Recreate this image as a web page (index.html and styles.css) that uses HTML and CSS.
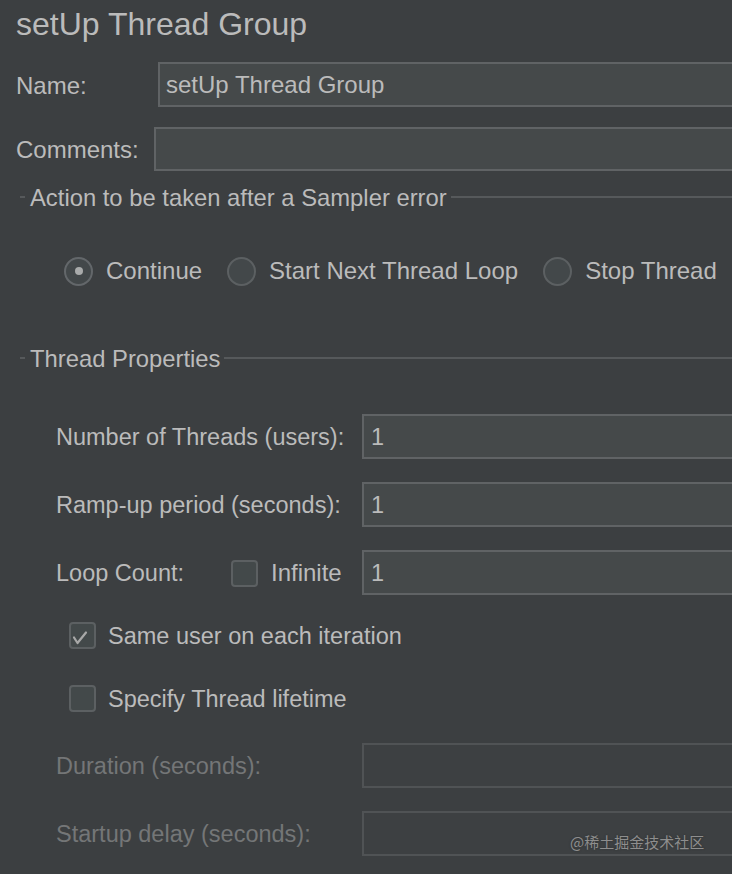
FILE: index.html
```html
<!DOCTYPE html>
<html>
<head>
<meta charset="utf-8">
<link rel="stylesheet" href="styles.css">
</head>
<body>
<div class="panel">
  <div class="title">setUp Thread Group</div>

  <div class="row row-name">
    <span class="lbl lbl-name">Name:</span>
    <div class="field">setUp Thread Group</div>
  </div>

  <div class="row row-comments">
    <span class="lbl lbl-comments">Comments:</span>
    <div class="field field-comments"></div>
  </div>

  <div class="section section-action">
    <span class="sec-dash"></span>
    <span class="sec-title">Action to be taken after a Sampler error</span>
    <span class="sec-line"></span>
  </div>

  <div class="radios">
    <span class="radio radio-on"><span class="dot"></span></span>
    <span class="radio-text">Continue</span>
    <span class="radio"></span>
    <span class="radio-text">Start Next Thread Loop</span>
    <span class="radio"></span>
    <span class="radio-text">Stop Thread</span>
  </div>

  <div class="section section-thread">
    <span class="sec-dash"></span>
    <span class="sec-title">Thread Properties</span>
    <span class="sec-line"></span>
  </div>

  <div class="trow trow-first">
    <span class="tlbl">Number of Threads (users):</span>
    <div class="field tfield">1</div>
  </div>
  <div class="trow">
    <span class="tlbl">Ramp-up period (seconds):</span>
    <div class="field tfield">1</div>
  </div>
  <div class="trow">
    <div class="tlbl loop">
      <span class="loop-lbl">Loop Count:</span>
      <span class="check"></span>
      <span class="check-text">Infinite</span>
    </div>
    <div class="field tfield">1</div>
  </div>

  <div class="cbrow cbrow-first">
    <span class="check">
      <svg class="tick" viewBox="0 0 27 27" width="27" height="27"><path d="M5 15.5 L8.5 21 L17 10.5" fill="none" stroke="#a8a8a8" stroke-width="2.2" stroke-linecap="round" stroke-linejoin="round"/></svg>
    </span>
    <span class="cb-text">Same user on each iteration</span>
  </div>
  <div class="cbrow cbrow-second">
    <span class="check"></span>
    <span class="cb-text">Specify Thread lifetime</span>
  </div>

  <div class="trow trow-disabled-first">
    <span class="tlbl disabled">Duration (seconds):</span>
    <div class="field tfield field-disabled"></div>
  </div>
  <div class="trow">
    <span class="tlbl disabled">Startup delay (seconds):</span>
    <div class="field tfield field-disabled"></div>
  </div>

  <div class="watermark">@稀土掘金技术社区</div>
</div>
</body>
</html>
```

FILE: styles.css
```css
html, body {
  margin: 0;
  padding: 0;
  background: #3c3f41;
  overflow: hidden;
}

.panel {
  position: relative;
  width: 732px;
  height: 874px;
  display: flex;
  flex-direction: column;
  font-family: "Liberation Sans", Arial, sans-serif;
  font-size: 24px;
  color: #bbbbbb;
  overflow: hidden;
}

.title {
  margin-top: 6px;
  padding-left: 16px;
  font-size: 32px;
  line-height: 36px;
  height: 36px;
  white-space: nowrap;
}

.row {
  display: flex;
  align-items: center;
  padding-left: 16px;
}

.row-name {
  margin-top: 20px;
  height: 45px;
}

.row-comments {
  margin-top: 20px;
  height: 44px;
}

.lbl {
  padding-top: 2px;
}

.lbl-name { width: 142px; flex: none; }
.lbl-comments { width: 138px; flex: none; }

.field {
  flex: 1;
  align-self: stretch;
  margin-right: -6px;
  box-sizing: border-box;
  background: #45494a;
  border: 2px solid #606365;
  display: flex;
  align-items: center;
  padding-left: 6px;
  padding-top: 1px;
  white-space: nowrap;
}

.section {
  display: flex;
  align-items: center;
  height: 30px;
  padding-left: 20px;
}

.section-action { margin-top: 11px; }
.section-thread { margin-top: 57px; }

.sec-dash {
  width: 5px;
  height: 2px;
  background: #56595b;
  flex: none;
}

.sec-title {
  margin-left: 5px;
  white-space: nowrap;
  padding-top: 1px;
  font-size: 23.8px;
}

.sec-line {
  flex: 1;
  height: 2px;
  background: #56595b;
  margin-left: 4px;
}

.radios {
  margin-top: 44px;
  height: 30px;
  display: flex;
  align-items: center;
  padding-left: 64px;
  white-space: nowrap;
}

.radio {
  width: 29px;
  height: 29px;
  box-sizing: border-box;
  border-radius: 50%;
  border: 2px solid #5c6062;
  background: #43484a;
  flex: none;
  display: flex;
  align-items: center;
  justify-content: center;
}

.radio-on { border-color: #63676a; }

.dot {
  width: 8px;
  height: 8px;
  border-radius: 50%;
  background: #a9abab;
}

.radio-text {
  margin-left: 13px;
  margin-right: 25px;
}

.trow {
  display: flex;
  align-items: center;
  height: 45px;
  margin-top: 23px;
  padding-left: 56px;
  font-size: 23.5px;
}

.trow-first { margin-top: 41px; }
.trow-disabled-first { margin-top: 31px; }

.tlbl {
  width: 306px;
  flex: none;
  white-space: nowrap;
  padding-top: 1px;
}

.tfield {
  padding-left: 7px;
}

.loop {
  display: flex;
  align-items: center;
}

.loop-lbl {
  width: 175px;
  flex: none;
}

.check {
  width: 27px;
  height: 27px;
  box-sizing: border-box;
  border: 2px solid #5c6062;
  border-radius: 4px;
  background: #43494a;
  flex: none;
  position: relative;
}

.tick {
  position: absolute;
  left: -2px;
  top: -2px;
}

.check-text {
  margin-left: 13px;
  font-size: 24px;
}

.cbrow {
  display: flex;
  align-items: center;
  height: 27px;
  padding-left: 69px;
  white-space: nowrap;
  font-size: 23.5px;
}

.cbrow-first { margin-top: 27px; }
.cbrow-second { margin-top: 36px; }

.cb-text { margin-left: 12px; padding-top: 2px; }

.disabled { color: #747677; }

.field-disabled {
  background: #3d4042;
  border-color: #505355;
}

.watermark {
  position: absolute;
  left: 570px;
  top: 831px;
  font-family: "Noto Sans CJK SC", "Liberation Sans", sans-serif;
  font-size: 15px;
  line-height: 22px;
  color: #8e8e8e;
  text-shadow: 0 0 2px #2c2e30;
  white-space: nowrap;
}
```
